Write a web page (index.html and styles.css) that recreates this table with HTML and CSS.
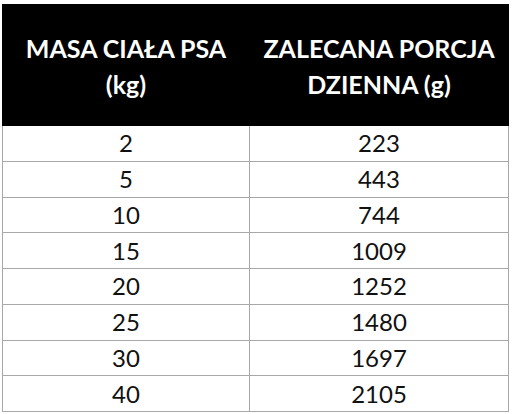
FILE: index.html
```html
<!DOCTYPE html>
<html lang="pl">
<head>
<meta charset="utf-8">
<link rel="stylesheet" href="styles.css">
</head>
<body>
<div class="wrap">
<table class="portions">
<thead>
<tr>
<th class="col-a">MASA CIAŁA PSA<br>(kg)</th>
<th class="col-b">ZALECANA PORCJA<br>DZIENNA (g)</th>
</tr>
</thead>
<tbody>
<tr><td>2</td><td>223</td></tr>
<tr><td>5</td><td>443</td></tr>
<tr><td>10</td><td>744</td></tr>
<tr><td>15</td><td>1009</td></tr>
<tr><td>20</td><td>1252</td></tr>
<tr><td>25</td><td>1480</td></tr>
<tr><td>30</td><td>1697</td></tr>
<tr><td>40</td><td>2105</td></tr>
</tbody>
</table>
</div>
</body>
</html>
```
FILE: styles.css
```css
html, body {
  margin: 0;
  padding: 0;
  background: #ffffff;
}
.wrap {
  padding: 4px 3px 0 2px;
}
.portions {
  width: 507px;
  border-collapse: collapse;
  table-layout: fixed;
  font-family: Lato, "Open Sans", sans-serif;
  color: #111111;
}
.portions th {
  background: #000000;
  color: #ffffff;
  font-weight: 700;
  font-size: 25px;
  line-height: 36px;
  height: 121px;
  padding: 1px 0 0 0;
  box-sizing: border-box;
  text-align: center;
  vertical-align: middle;
  border: 1px solid #000000;
}
.portions .col-a {
  width: 247px;
}
.portions td {
  height: 35.75px;
  padding: 0;
  box-sizing: border-box;
  text-align: center;
  vertical-align: middle;
  font-size: 24px;
  line-height: 26px;
  border: 1px solid #a8a8a8;
}
```
